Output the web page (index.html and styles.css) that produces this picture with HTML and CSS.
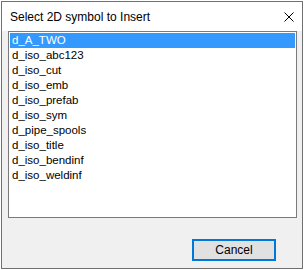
FILE: index.html
```html
<!DOCTYPE html>
<html>
<head>
<meta charset="utf-8">
<link rel="stylesheet" href="styles.css">
</head>
<body>
<div class="window">
  <div class="titlebar">
    <span class="title">Select 2D symbol to Insert</span>
    <svg class="close" width="10" height="10" viewBox="0 0 10 10"><path d="M0.5 0.5 L9.5 9.5 M9.5 0.5 L0.5 9.5" stroke="#000" stroke-width="1" fill="none"/></svg>
  </div>
  <div class="content">
    <ul class="list">
      <li class="selected">d_A_TWO</li>
      <li>d_iso_abc123</li>
      <li>d_iso_cut</li>
      <li>d_iso_emb</li>
      <li>d_iso_prefab</li>
      <li>d_iso_sym</li>
      <li>d_pipe_spools</li>
      <li>d_iso_title</li>
      <li>d_iso_bendinf</li>
      <li>d_iso_weldinf</li>
    </ul>
    <div class="buttons">
      <button class="btn">Cancel</button>
    </div>
  </div>
</div>
</body>
</html>
```
FILE: styles.css
```css
html, body {
  margin: 0;
  padding: 0;
  background: #ffffff;
}
body {
  font-family: "Liberation Sans", Arial, sans-serif;
  font-size: 11.5px;
  color: #000;
}
.window {
  box-sizing: border-box;
  margin: 1px 0 0 1px;
  width: 302px;
  height: 268px;
  border: 1px solid #707070;
  background: #f0f0f0;
  display: flex;
  flex-direction: column;
}
.titlebar {
  height: 29px;
  background: #ffffff;
  display: flex;
  align-items: center;
  justify-content: space-between;
  padding: 0 8px 0 8px;
  flex: none;
}
.title {
  font-size: 12px;
  line-height: 14px;
  margin-top: 1px;
}
.close {
  display: block;
}
.content {
  flex: 1;
  display: flex;
  flex-direction: column;
}
.list {
  list-style: none;
  margin: 0 5px 0 6px;
  padding: 1px 1px;
  box-sizing: border-box;
  height: 187px;
  background: #ffffff;
  border: 1px solid #7a7a7a;
}
.list li {
  height: 15px;
  line-height: 15px;
  padding-left: 2px;
  white-space: nowrap;
}
.list li.selected {
  background: #3399ff;
  color: #ffffff;
}
.buttons {
  display: flex;
  justify-content: flex-end;
  padding: 21px 26px 0 0;
}
.btn {
  box-sizing: border-box;
  width: 84px;
  height: 22px;
  border: 2px solid #0078d7;
  background: #e1e1e1;
  font-family: inherit;
  font-size: 12px;
  color: #000;
  padding: 0;
  margin: 0;
  line-height: 16px;
}
```
